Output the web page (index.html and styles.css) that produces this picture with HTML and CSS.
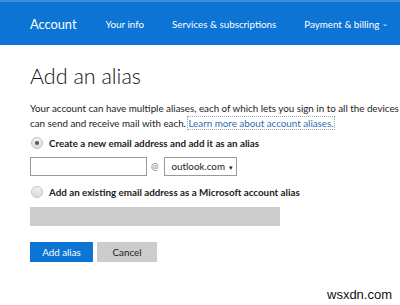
FILE: index.html
```html
<!DOCTYPE html>
<html>
<head>
<meta charset="utf-8">
<link rel="stylesheet" href="styles.css">
</head>
<body>
<header class="topbar">
  <span class="brand">Account</span>
  <nav class="nav">
    <span class="nav-item">Your info</span>
    <span class="nav-item">Services &amp; subscriptions</span>
    <span class="nav-item">Payment &amp; billing <span class="chev">&#8964;</span></span>
  </nav>
</header>
<main class="content">
  <h1 class="title">Add an alias</h1>
  <p class="desc">Your account can have multiple aliases, each of which lets you sign in to all the devices and services that use your Microsoft account. You<br>can send and receive mail with each. <a class="link">Learn more about account aliases.</a></p>
  <div class="option first">
    <span class="radio checked"></span>
    <span class="option-label">Create a new email address and add it as an alias</span>
  </div>
  <div class="field-row">
    <span class="textbox"></span>
    <span class="at">@</span>
    <span class="select">outlook.com <span class="caret">&#9662;</span></span>
  </div>
  <div class="option second">
    <span class="radio"></span>
    <span class="option-label">Add an existing email address as a Microsoft account alias</span>
  </div>
  <div class="disabled-box"></div>
  <div class="buttons">
    <span class="btn primary">Add alias</span>
    <span class="btn secondary">Cancel</span>
  </div>
</main>
<div class="watermark">wsxdn.com</div>
</body>
</html>
```
FILE: styles.css
```css
html, body {
  margin: 0;
  padding: 0;
  width: 400px;
  height: 305px;
  overflow: hidden;
  background: #ffffff;
  font-family: Lato, "Open Sans", sans-serif;
  color: #222;
  position: relative;
}
.topbar {
  height: 45px;
  background: #0b74d4;
  border-top: 2px solid #3b8fe0;
  box-sizing: border-box;
  display: flex;
  align-items: center;
  padding-left: 30px;
  color: #fff;
  white-space: nowrap;
}
.brand {
  font-size: 12.8px;
  font-weight: 400;
  margin-right: 29px;
}
.nav {
  display: flex;
  gap: 28px;
  font-size: 9.8px;
}
.chev {
  font-size: 7px;
  position: relative;
  top: -2px;
}
.content {
  width: 600px;
  padding-left: 30px;
}
.title {
  font-size: 21.5px;
  font-weight: 300;
  margin: 15px 0 0 0;
  line-height: 32px;
  color: #111;
}
.desc {
  font-size: 9.8px;
  line-height: 15px;
  margin: 9px 0 0 0;
  color: #222;
  white-space: nowrap;
}
.link {
  color: #2a6fb5;
  outline: 1px dotted #9ab;
}
.option {
  display: flex;
  align-items: center;
  height: 14px;
  gap: 6px;
}
.option.first {
  margin-top: 5px;
}
.option.second {
  margin-top: 9px;
}
.radio {
  width: 10px;
  height: 10px;
  border: 1px solid #c4c4c4;
  border-radius: 50%;
  background: linear-gradient(#f0f0f0, #dcdcdc);
  position: relative;
  margin-left: 1px;
}
.radio.checked::after {
  content: "";
  position: absolute;
  left: 3px;
  top: 3px;
  width: 4px;
  height: 4px;
  border-radius: 50%;
  background: #555;
}
.option-label {
  font-size: 9.8px;
  font-weight: 700;
  color: #222;
}
.field-row {
  display: flex;
  align-items: center;
  margin-top: 7px;
  height: 19px;
}
.textbox {
  width: 117px;
  height: 19px;
  box-sizing: border-box;
  border: 1px solid #9a9a9a;
  background: #fff;
}
.at {
  font-size: 9px;
  color: #777;
  margin: 0 5px 0 4px;
}
.select {
  width: 73px;
  height: 19px;
  box-sizing: border-box;
  border: 1px solid #9a9a9a;
  font-size: 9.8px;
  line-height: 17px;
  padding-left: 7px;
  color: #222;
  white-space: nowrap;
}
.caret {
  font-size: 7px;
  margin-left: 2px;
}
.disabled-box {
  width: 250px;
  height: 19px;
  margin-top: 8px;
  background: #cccccc;
}
.buttons {
  display: flex;
  gap: 4px;
  margin-top: 16px;
}
.btn {
  width: 63px;
  height: 20px;
  line-height: 20px;
  text-align: center;
  font-size: 9.8px;
}
.btn.primary {
  background: #0b74d4;
  color: #fff;
}
.btn.secondary {
  width: 60px;
  background: #cccccc;
  color: #222;
}
.watermark {
  position: absolute;
  left: 327px;
  top: 287px;
  font-family: "Liberation Sans", Arial, sans-serif;
  font-size: 13px;
  color: #111;
}
```
